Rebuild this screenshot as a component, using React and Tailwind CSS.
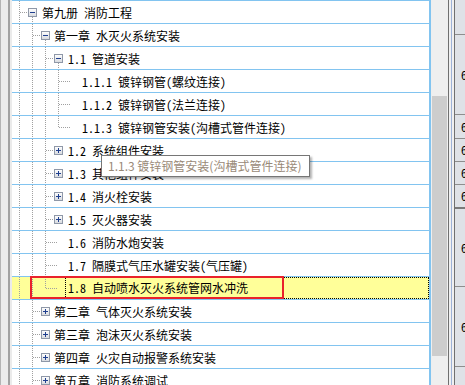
import React from "react";

// x of each tree level's guide line, relative to the tree's left edge
const L = [7, 20, 33, 46];
const TEXT_X = [30, 42, 56, 70];

const rows = [
  { lv: 0, text: "第九册 消防工程", box: "minus", pass: [] },
  { lv: 1, text: "第一章 水灭火系统安装", box: "minus", pass: [0] },
  { lv: 2, text: "1.1 管道安装", box: "minus", pass: [0, 1] },
  { lv: 3, text: "1.1.1 镀锌钢管(螺纹连接)", pass: [0, 1, 2] },
  { lv: 3, text: "1.1.2 镀锌钢管(法兰连接)", pass: [0, 1, 2] },
  { lv: 3, text: "1.1.3 镀锌钢管安装(沟槽式管件连接)", pass: [0, 1, 2], last: true },
  { lv: 2, text: "1.2 系统组件安装", box: "plus", pass: [0, 1] },
  { lv: 2, text: "1.3 其他组件安装", box: "plus", pass: [0, 1] },
  { lv: 2, text: "1.4 消火栓安装", box: "plus", pass: [0, 1] },
  { lv: 2, text: "1.5 灭火器安装", box: "plus", pass: [0, 1] },
  { lv: 2, text: "1.6 消防水炮安装", pass: [0, 1] },
  { lv: 2, text: "1.7 隔膜式气压水罐安装(气压罐)", pass: [0, 1] },
  { lv: 2, text: "1.8 自动喷水灭火系统管网水冲洗", pass: [0, 1], last: true, selected: true },
  { lv: 1, text: "第二章 气体灭火系统安装", box: "plus", pass: [0] },
  { lv: 1, text: "第三章 泡沫灭火系统安装", box: "plus", pass: [0] },
  { lv: 1, text: "第四章 火灾自动报警系统安装", box: "plus", pass: [0] },
  { lv: 1, text: "第五章 消防系统调试", box: "plus", pass: [0] },
];

const dots = { stroke: "#a0a0a0", strokeDasharray: "1 1", shapeRendering: "crispEdges" };

function Guides({ r, i, w }) {
  const x = L[r.lv];
  return (
    <svg width={w} height={22} className="shrink-0">
      <defs>
        <linearGradient id={`bx${i}`} x1="0" y1="0" x2="0" y2="1">
          <stop offset="0" stopColor="#ffffff" />
          <stop offset="1" stopColor="#d6d9de" />
        </linearGradient>
      </defs>
      {r.pass.map((j) => (
        <line key={j} x1={L[j] + 0.5} x2={L[j] + 0.5} y1={0} y2={22} {...dots} />
      ))}
      <line x1={x + 0.5} x2={x + 0.5} y1={0} y2={r.last ? 12 : 22} {...dots} />
      <line x1={x + 1} x2={r.box ? x + 9 : x + 13} y1={11.5} y2={11.5} {...dots} />
      {r.box && (
        <g shapeRendering="crispEdges">
          <rect x={x + 9.5} y={7.5} width={8} height={8} fill={`url(#bx${i})`} stroke="#8f98a8" />
          <line x1={x + 11} x2={x + 16} y1={11.5} y2={11.5} stroke="#1f3f8f" />
          {r.box === "plus" && <line x1={x + 13.5} x2={x + 13.5} y1={9} y2={14} stroke="#1f3f8f" />}
        </g>
      )}
      {r.box === "minus" && (
        <line x1={x + 13.5} x2={x + 13.5} y1={16} y2={22} {...dots} />
      )}
    </svg>
  );
}

const treeFont = "font-['Noto_Sans_Mono_CJK_SC','Noto_Sans_CJK_SC',monospace] text-[12px] leading-none text-black whitespace-nowrap";

function Row({ r, i }) {
  if (r.selected) {
    return (
      <div className="relative h-[23px] border-t border-[#82c4f0] flex bg-[#ffff99]">
        <Guides r={r} i={i} w={TEXT_X[r.lv] - 3} />
        <div className={`flex-1 flex items-center pl-[2px] border border-dotted border-black ${treeFont}`}>
          {r.text}
        </div>
        <div className="absolute -top-px left-[18px] w-[254px] h-[23px] border-2 border-[#e9222b]" />
      </div>
    );
  }
  return (
    <div className="h-[23px] border-t border-[#82c4f0] flex items-center">
      <Guides r={r} i={i} w={TEXT_X[r.lv]} />
      <span className={`pt-px ${treeFont}`}>{r.text}</span>
    </div>
  );
}

const cells = [
  { h: "h-[34px]", v: "" },
  { h: "h-[80px]", v: "6" },
  { h: "h-[24px]", v: "6" },
  { h: "h-[23px]", v: "6" },
  { h: "h-[23px]", v: "6" },
  { h: "h-[23px]", v: "6" },
  { h: "h-[79px]", v: "6", thick: true },
  { h: "h-[80px]", v: "6" },
  { h: "h-[40px]", v: "" },
];

export default function App() {
  return (
    <div className="relative flex w-[465px] h-[385px] overflow-hidden bg-white">
      {/* left frame */}
      <div className="flex shrink-0">
        <div className="w-px bg-[#b4b4b4]" />
        <div className="w-[7px] bg-[#ececec]" />
        <div className="w-[2px] bg-[#a2a2a2]" />
        <div className="w-[2px] bg-[#ebebeb]" />
      </div>

      {/* tree */}
      <div className="w-[419px] shrink-0 border-r-2 border-[#82c4f0] bg-white">
        {rows.map((r, i) => (
          <Row key={i} r={r} i={i} />
        ))}
      </div>

      {/* scrollbar */}
      <div className="w-[17px] shrink-0 bg-[#efefef] pl-px pr-[1px]">
        <div className="mt-[96px] h-[260px] bg-[#cdcdcd]" />
      </div>

      {/* splitter */}
      <div className="flex shrink-0">
        <div className="w-px bg-[#707070]" />
        <div className="w-[2px] bg-[#f0f0f0]" />
        <div className="w-px bg-[#9db2d8]" />
        <div className="w-[2px] bg-[#f0f0f0]" />
        <div className="w-px bg-[#707070]" />
      </div>

      {/* right grid */}
      <div className="w-[10px] shrink-0 bg-[#dfe2e7] overflow-hidden">
        {cells.map((c, i) => (
          <div
            key={i}
            className={`${c.h} flex items-center pl-[6px] ${treeFont} ${i === 0 ? "" : c.thick ? "border-t-2 border-[#7a7a7a]" : "border-t border-[#8e8e8e]"}`}
          >
            {c.v}
          </div>
        ))}
      </div>

      {/* tooltip */}
      <div className="absolute left-[101px] top-[155px] w-[209px] h-[22px] bg-white border border-[#767676] shadow-[2px_2px_2px_rgba(0,0,0,0.3)] flex items-center pl-[6px]">
        <span className="font-['Noto_Sans_CJK_SC','Noto_Sans',sans-serif] text-[12px] leading-none text-[#9a8a78] whitespace-nowrap">
          1.1.3 镀锌钢管安装(沟槽式管件连接)
        </span>
      </div>
    </div>
  );
}
